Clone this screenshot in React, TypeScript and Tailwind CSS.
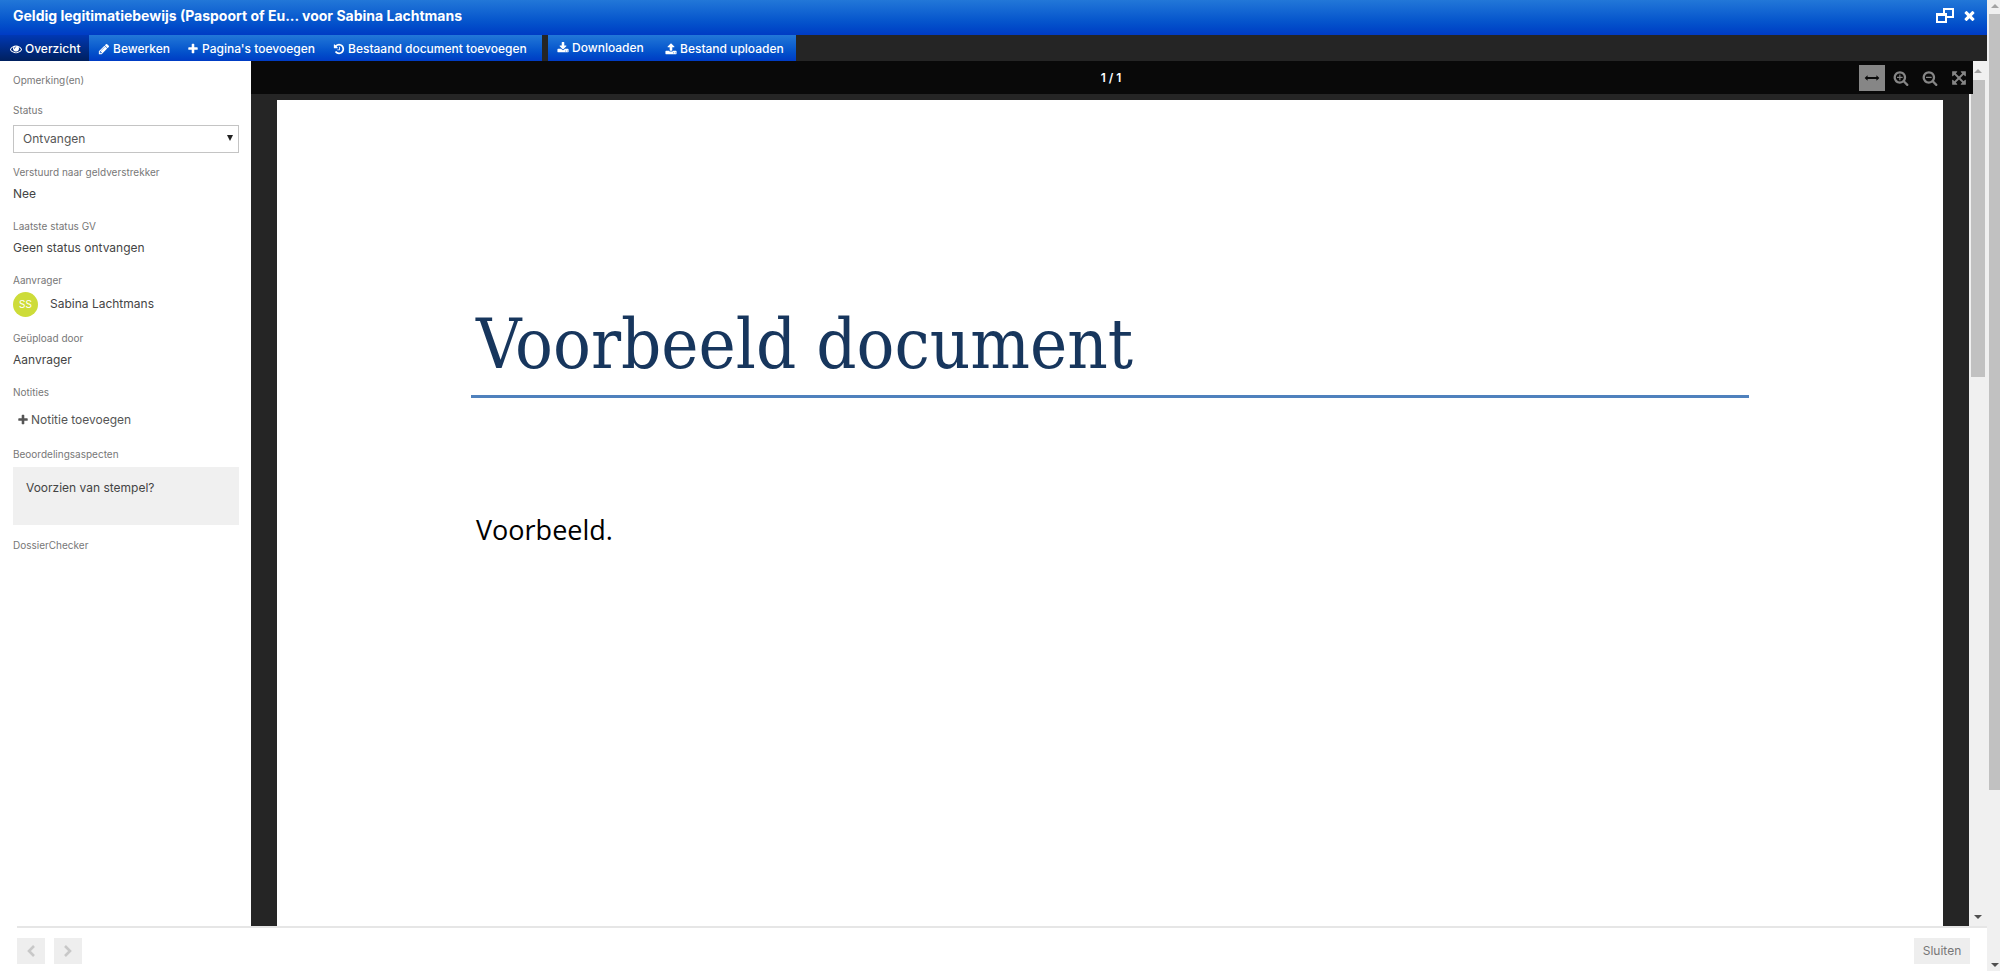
import React from "react";

const ICONS = {
  eye: "M1664 960q-152-236-381-353 61 104 61 225 0 185-131.5 316.5t-316.5 131.5-316.5-131.5-131.5-316.5q0-121 61-225-229 117-381 353 133 205 333.5 326.5t434.5 121.5 434.5-121.5 333.5-326.5zm-720-384q0-20-14-34t-34-14q-125 0-214.5 89.5t-89.5 214.5q0 20 14 34t34 14 34-14 14-34q0-86 61-147t147-61q20 0 34-14t14-34zm848 384q0 34-20 69-140 230-376.5 368.5t-499.5 138.5-499.5-139-376.5-368q-20-35-20-69t20-69q140-229 376.5-368t499.5-139 499.5 139 376.5 368q20 35 20 69z",
  pencil: "M491 1536l91-91-235-235-91 91v107h128v128h107zm523-928q0-22-22-22-10 0-17 7l-542 542q-7 7-7 17 0 22 22 22 10 0 17-7l542-542q7-7 7-17zm-54-192l416 416-832 832h-416v-416zm683 96q0 53-37 90l-166 166-416-416 166-165q36-38 90-38 53 0 91 38l235 234q37 39 37 91z",
  plus: "M1600 736v192q0 40-28 68t-68 28h-416v416q0 40-28 68t-68 28h-192q-40 0-68-28t-28-68v-416h-416q-40 0-68-28t-28-68v-192q0-40 28-68t68-28h416v-416q0-40 28-68t68-28h192q40 0 68 28t28 68v416h416q40 0 68 28t28 68z",
  history: "M1664 896q0 156-61 298t-164 245-245 164-298 61q-172 0-327-72.5t-264-204.5q-7-10-6.5-22.5t8.5-20.5l137-138q10-9 25-9 16 2 23 12 73 95 179 147t225 52q104 0 198.5-40.5t163.5-109.5 109.5-163.5 40.5-198.5-40.5-198.5-109.5-163.5-163.5-109.5-198.5-40.5q-98 0-188 35.5t-160 101.5l137 138q31 30 14 69-17 40-59 40h-448q-26 0-45-19t-19-45v-448q0-42 40-59 39-17 69 14l130 129q107-101 244.5-156.5t284.5-55.5q156 0 298 61t245 164 164 245 61 298zm-640-288v448q0 14-9 23t-23 9h-320q-14 0-23-9t-9-23v-64q0-14 9-23t23-9h224v-352q0-14 9-23t23-9h64q14 0 23 9t9 23z",
  download: "M1344 1344q0-26-19-45t-45-19-45 19-19 45 19 45 45 19 45-19 19-45zm256 0q0-26-19-45t-45-19-45 19-19 45 19 45 45 19 45-19 19-45zm128-224v320q0 40-28 68t-68 28h-1472q-40 0-68-28t-28-68v-320q0-40 28-68t68-28h465l135 136q58 56 136 56t136-56l136-136h464q40 0 68 28t28 68zm-325-569q17 41-14 70l-448 448q-18 19-45 19t-45-19l-448-448q-31-29-14-70 17-39 59-39h256v-448q0-26 19-45t45-19h256q26 0 45 19t19 45v448h256q42 0 59 39z",
  upload: "M1344 1472q0-26-19-45t-45-19-45 19-19 45 19 45 45 19 45-19 19-45zm256 0q0-26-19-45t-45-19-45 19-19 45 19 45 45 19 45-19 19-45zm128-224v320q0 40-28 68t-68 28h-1472q-40 0-68-28t-28-68v-320q0-40 28-68t68-28h427q21 56 70.5 92t110.5 36h256q61 0 110.5-36t70.5-92h427q40 0 68 28t28 68zm-325-648q-17 40-59 40h-256v448q0 26-19 45t-45 19h-256q-26 0-45-19t-19-45v-448h-256q-42 0-59-40-17-39 14-69l448-448q18-19 45-19t45 19l448 448q31 30 14 69z",
  zoomIn: "M1088 800v64q0 13-9.5 22.5t-22.5 9.5h-224v224q0 13-9.5 22.5t-22.5 9.5h-64q-13 0-22.5-9.5t-9.5-22.5v-224h-224q-13 0-22.5-9.5t-9.5-22.5v-64q0-13 9.5-22.5t22.5-9.5h224v-224q0-13 9.5-22.5t22.5-9.5h64q13 0 22.5 9.5t9.5 22.5v224h224q13 0 22.5 9.5t9.5 22.5zm128 32q0-185-131.5-316.5t-316.5-131.5-316.5 131.5-131.5 316.5 131.5 316.5 316.5 131.5 316.5-131.5 131.5-316.5zm512 832q0 53-37.5 90.5t-90.5 37.5q-54 0-90-38l-343-342q-179 124-399 124-143 0-273.5-55.5t-225-150-150-225-55.5-273.5 55.5-273.5 150-225 225-150 273.5-55.5 273.5 55.5 225 150 150 225 55.5 273.5q0 220-124 399l343 343q37 37 37 90z",
  zoomOut: "M1088 800v64q0 13-9.5 22.5t-22.5 9.5h-576q-13 0-22.5-9.5t-9.5-22.5v-64q0-13 9.5-22.5t22.5-9.5h576q13 0 22.5 9.5t9.5 22.5zm128 32q0-185-131.5-316.5t-316.5-131.5-316.5 131.5-131.5 316.5 131.5 316.5 316.5 131.5 316.5-131.5 131.5-316.5zm512 832q0 53-37.5 90.5t-90.5 37.5q-54 0-90-38l-343-342q-179 124-399 124-143 0-273.5-55.5t-225-150-150-225-55.5-273.5 55.5-273.5 150-225 225-150 273.5-55.5 273.5 55.5 225 150 150 225 55.5 273.5q0 220-124 399l343 343q37 37 37 90z",
  expand: "M1411 541l-355 355 355 355 144-144q29-31 70-14 39 17 39 59v448q0 26-19 45t-45 19h-448q-42 0-59-40-17-39 14-69l144-144-355-355-355 355 144 144q31 30 14 69-17 40-59 40h-448q-26 0-45-19t-19-45v-448q0-42 40-59 39-17 69 14l144 144 355-355-355-355-144 144q-19 19-45 19-12 0-24-5-40-17-40-59v-448q0-26 19-45t45-19h448q42 0 59 40 17 39-14 69l-144 144 355 355 355-355-144-144q-31-30-14-69 17-40 59-40h448q26 0 45 19t19 45v448q0 42-39 59-13 5-25 5-26 0-45-19z",
  fitWidth: "M1720 896l-330 300v-190h-988v190l-330-300 330-300v190h988v-190z",
  close: "M1490 1322q0 40-28 68l-136 136q-28 28-68 28t-68-28l-294-294-294 294q-28 28-68 28t-68-28l-136-136q-28-28-28-68t28-68l294-294-294-294q-28-28-28-68t28-68l136-136q28-28 68-28t68 28l294 294 294-294q28-28 68-28t68 28l136 136q28 28 28 68t-28 68l-294 294 294 294q28 28 28 68z",
};

type IconName = keyof typeof ICONS;

function Icon({ name, className = "size-3" }: { name: IconName; className?: string }) {
  return (
    <svg viewBox="0 0 1792 1792" fill="currentColor" aria-hidden="true" className={`shrink-0 ${className}`}>
      <path d={ICONS[name]} />
    </svg>
  );
}

function Tab({ icon, label, className }: { icon: IconName; label: string; className: string }) {
  return (
    <button type="button" className={`flex h-full items-center gap-[3px] pt-px whitespace-nowrap ${className}`}>
      <Icon name={icon} />
      {label}
    </button>
  );
}

function Arrow({ up = false, className }: { up?: boolean; className: string }) {
  return (
    <svg viewBox="0 0 8 4" aria-hidden="true" fill="currentColor" className={`h-1 w-2 shrink-0 ${className}`}>
      <path d={up ? "M4 0L8 4H0z" : "M0 0h8L4 4z"} />
    </svg>
  );
}

function Field({ label, children }: { label: string; children: React.ReactNode }) {
  return (
    <div className="mb-[14px]">
      <dt className="text-[10px] leading-4 text-[#777]">{label}</dt>
      <dd className="mt-1 leading-5 text-[#444]">{children}</dd>
    </div>
  );
}

function ViewerButton({ icon, label, active = false }: { icon: IconName; label: string; active?: boolean }) {
  return (
    <button
      type="button"
      aria-label={label}
      aria-pressed={active}
      className={`flex h-[26px] w-[26px] items-center justify-center ${active ? "bg-[#868686] text-[#0a0a0a]" : "text-[#868686]"}`}
    >
      <Icon name={icon} className="size-4" />
    </button>
  );
}

export default function App() {
  return (
    <div className="flex h-screen bg-white font-['Inter','Liberation_Sans',sans-serif] text-xs">
      <div className="flex min-w-0 flex-1 flex-col">
        <header className="flex h-[35px] shrink-0 items-center justify-between bg-linear-to-b from-[#2277d8] to-[#003bc4] pr-[10px] pb-1 pl-[13px] text-white">
          <h1 className="truncate text-sm font-bold">Geldig legitimatiebewijs (Paspoort of Eu... voor Sabina Lachtmans</h1>
          <div className="flex items-center gap-2">
            <button type="button" aria-label="Venster herstellen">
              <svg viewBox="0 0 18 15" className="h-[15px] w-[18px]" fill="none" stroke="currentColor" strokeWidth="2" aria-hidden="true">
                <path d="M8 5V1h9v8h-6" />
                <path d="M1 6h9v8H1z" />
                <path d="M1 7h9" />
              </svg>
            </button>
            <button type="button" aria-label="Venster sluiten">
              <Icon name="close" className="size-[15px]" />
            </button>
          </div>
        </header>

        <nav className="flex h-[26px] shrink-0 gap-[6px] bg-[#252525] font-medium text-white">
          <div className="flex bg-linear-to-b from-[#2277d8] to-[#003bc4]">
            <Tab icon="eye" label="Overzicht" className="w-[89px] bg-linear-to-b from-[#0038b4] to-[#00205f] pl-[10px]" />
            <Tab icon="pencil" label="Bewerken" className="w-[89px] pl-[9px]" />
            <Tab icon="plus" label="Pagina's toevoegen" className="w-[146px] pl-[9px]" />
            <Tab icon="history" label="Bestaand document toevoegen" className="w-[218px] pl-[9px]" />
          </div>
          <div className="flex bg-linear-to-b from-[#2277d8] to-[#003bc4]">
            <Tab icon="download" label="Downloaden" className="w-[108px] pb-[2px] pl-[9px]" />
            <Tab icon="upload" label="Bestand uploaden" className="w-[140px] pl-[9px]" />
          </div>
        </nav>

        <main className="flex min-h-0 flex-1">
          <aside className="w-[251px] shrink-0 overflow-hidden pt-[11px] pr-3 pl-[13px]">
            <p className="text-[10px] leading-4 text-[#777]">Opmerking(en)</p>
            <label htmlFor="status" className="mt-[14px] block text-[10px] leading-4 text-[#777]">
              Status
            </label>
            <div className="relative mt-[7px] mb-[11px]">
              <select id="status" className="h-7 w-full appearance-none border border-[#c4c4c4] bg-white pl-[9px] text-[#555]">
                <option>Ontvangen</option>
              </select>
              <svg viewBox="0 0 6 6" aria-hidden="true" className="pointer-events-none absolute top-[10px] right-[6px] size-[6px] fill-[#222]">
                <path d="M0 0h6L3 6z" />
              </svg>
            </div>
            <dl>
              <Field label="Verstuurd naar geldverstrekker">Nee</Field>
              <Field label="Laatste status GV">Geen status ontvangen</Field>
              <Field label="Aanvrager">
                <span className="flex h-6 items-center gap-3">
                  <span className="flex size-[25px] items-center justify-center rounded-full bg-[#cddc39] text-[10px] text-white">SS</span>
                  Sabina Lachtmans
                </span>
              </Field>
              <Field label="Geüpload door">Aanvrager</Field>
            </dl>
            <p className="text-[10px] leading-4 text-[#777]">Notities</p>
            <button type="button" className="mt-[10px] ml-1 flex h-5 items-center gap-[2px] text-[#555]">
              <Icon name="plus" />
              Notitie toevoegen
            </button>
            <p className="mt-4 text-[10px] leading-4 text-[#777]">Beoordelingsaspecten</p>
            <div className="mt-[5px] h-[58px] bg-[#f0f0f0] px-[13px] py-[11px] leading-5 text-[#444]">Voorzien van stempel?</div>
            <p className="mt-3 text-[10px] leading-4 text-[#777]">DossierChecker</p>
          </aside>

          <section aria-label="Documentweergave" className="flex min-w-0 flex-1 flex-col bg-[#252525]">
            <div className="relative z-10 -mr-1 flex h-[33px] shrink-0 items-center justify-end gap-[3px] bg-[#090909] pr-px">
              <span className="flex-1 pl-[115px] text-center font-semibold text-white">1 / 1</span>
              <ViewerButton icon="fitWidth" label="Breedte passend maken" active />
              <ViewerButton icon="zoomIn" label="Inzoomen" />
              <ViewerButton icon="zoomOut" label="Uitzoomen" />
              <ViewerButton icon="expand" label="Volledig scherm" />
            </div>
            <article className="mx-[26px] mt-[6px] min-h-0 flex-1 overflow-hidden bg-white px-[194px] pt-[197px]">
              <h2 className="border-b-3 border-[#4f81bd] pb-[4px] pl-[5px] font-['DejaVu_Serif_Condensed','DejaVu_Serif',serif] text-[70px] leading-[94px] text-[#17365d]">
                Voorbeeld document
              </h2>
              <p className="mt-[112px] pl-[5px] font-['Open_Sans','Noto_Sans',sans-serif] text-[27px] leading-10 text-black">Voorbeeld.</p>
            </article>
          </section>

          <div aria-hidden="true" className="flex w-[18px] shrink-0 flex-col items-center bg-[#f0f0f0] pt-2 pb-[7px]">
            <Arrow up className="text-[#a3a3a3]" />
            <div className="mt-[7px] h-[297px] w-[14px] bg-[#c1c1c1]" />
            <Arrow className="mt-auto text-[#505050]" />
          </div>
        </main>

        <footer className="ml-[17px] flex h-[45px] shrink-0 items-center gap-[9px] border-t-2 border-[#e6e6e6] pt-[3px] pr-[17px]">
          <button type="button" disabled aria-label="Vorige" className="flex h-[26px] w-7 items-center justify-center bg-[#eee] text-[#c8c8c8]">
            <svg viewBox="0 0 8 12" className="h-3 w-2" fill="none" stroke="currentColor" strokeWidth="2.6" aria-hidden="true">
              <path d="M7 1L2 6l5 5" />
            </svg>
          </button>
          <button type="button" disabled aria-label="Volgende" className="flex h-[26px] w-7 items-center justify-center bg-[#eee] text-[#c8c8c8]">
            <svg viewBox="0 0 8 12" className="h-3 w-2" fill="none" stroke="currentColor" strokeWidth="2.6" aria-hidden="true">
              <path d="M1 1l5 5-5 5" />
            </svg>
          </button>
          <button type="button" className="ml-auto h-[26px] w-14 bg-[#eee] text-[#777]">
            Sluiten
          </button>
        </footer>
      </div>

      <div aria-hidden="true" className="flex w-[13px] shrink-0 flex-col items-end bg-[#f0f0f0] pt-1 pb-1">
        <Arrow up className="mr-[1px] text-[#a3a3a3]" />
        <div className="mt-[6px] h-[776px] w-[11px] bg-[#c1c1c1]" />
        <Arrow className="mt-auto mr-[1px] text-[#505050]" />
      </div>
    </div>
  );
}
